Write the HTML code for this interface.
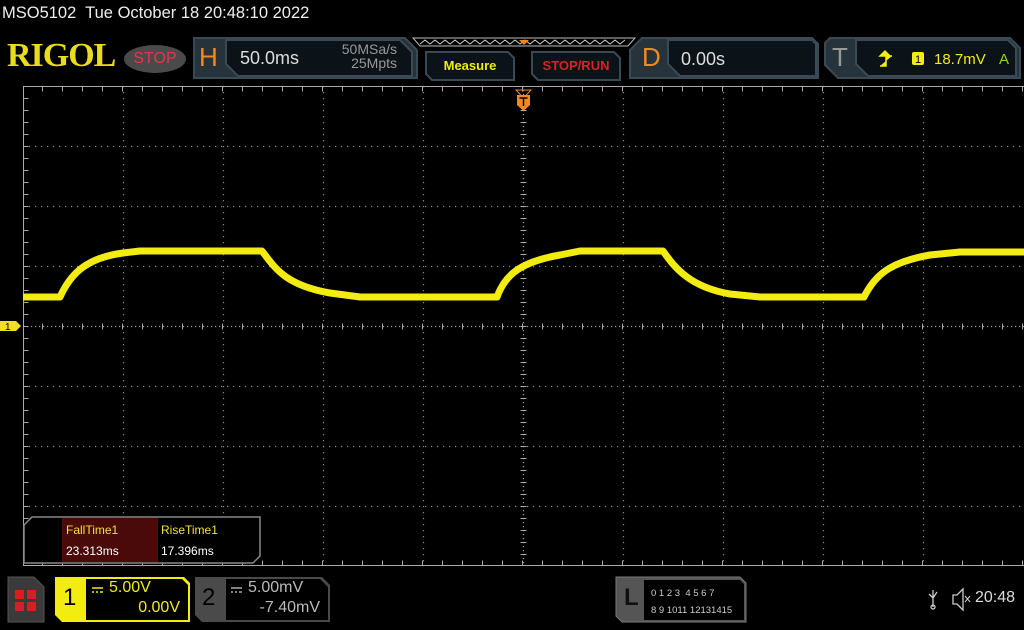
<!DOCTYPE html>
<html><head><meta charset="utf-8"><style>
html,body{margin:0;padding:0;background:#000;width:1024px;height:630px;overflow:hidden;font-family:"Liberation Sans",sans-serif;position:relative}
.a{position:absolute}
</style></head><body>
<div class="a" style="left:2px;top:4px;color:#eee;font-size:16.5px">MSO5102&nbsp; Tue October 18 20:48:10 2022</div>
<div class="a" style="left:7px;top:37px;color:#e8dc1c;font-family:'Liberation Serif',serif;font-weight:bold;font-size:34px;letter-spacing:-1px;transform:scaleX(1.0);transform-origin:left">RIGOL</div>
<div class="a" style="left:124px;top:45px;width:62px;height:28px;border-radius:50%;background:#4a4a4a;color:#e8344a;font-size:16px;line-height:28px;text-align:center">STOP</div>
<svg class="a" style="left:0;top:0" width="1024" height="630">
<g fill="#0b1218" stroke="#3a4a54" stroke-width="2">
<path d="M194 38 H405 L417 50 V78 H194 Z" fill="#26333b"/>
<path d="M226 40 H400 L412 52 V76 H238 L226 64 Z"/>
<path d="M426 52 H508 L514 58 V80 H432 L426 74 Z"/>
<path d="M532 52 H614 L620 58 V80 H538 L532 74 Z"/>
<path d="M642 38 H812 L818 44 V78 H630 V50 Z" fill="#26333b"/>
<path d="M668 40 H812 L816 44 V76 H680 L668 64 Z"/>
<path d="M830 38 H1010 L1020 48 V78 H838 L825 65 V43 Z" fill="#26333b"/>
<path d="M856 40 H1008 L1016 48 V76 H868 L856 64 Z"/>
</g>
<path d="M413 38 H635 L628 46 H420 Z" fill="none" stroke="#bbb" stroke-width="1"/>
<polyline points="420,44 425,40 430,44 435,40 440,44 445,40 450,44 455,40 460,44 465,40 470,44 475,40 480,44 485,40 490,44 495,40 500,44 505,40 510,44 515,40 520,44 525,40 530,44 535,40 540,44 545,40 550,44 555,40 560,44 565,40 570,44 575,40 580,44 585,40 590,44 595,40 600,44 605,40 610,44 615,40 620,44 625,40" fill="none" stroke="#ccc" stroke-width="1"/>
<path d="M519 40 H529 L524 45 Z" fill="#f08a20"/>
<!-- grid -->
<g stroke="#888" stroke-width="1.2" stroke-dasharray="1.2 4.8">
<path d="M123.5 86V566M223.5 86V566M323.5 86V566M423.5 86V566M623.5 86V566M723.5 86V566M823.5 86V566M923.5 86V566"/>
<path d="M23 146.5H1024M23 206.5H1024M23 266.5H1024M23 386.5H1024M23 446.5H1024M23 506.5H1024"/>
</g>
<g stroke="#999" stroke-width="1.2" stroke-dasharray="1.2 2.8">
<path d="M523.5 86V566M23 326.5H1024"/>
</g>
<g stroke="#aaa" stroke-width="1">
<path d="M23 86.5H1024M23.5 86V566M23 565.5H1024"/>
</g>
<g stroke="#aaa" stroke-width="1">
<path d="M23 326.5H1024" stroke-width="6" stroke-dasharray="1 19" stroke-dashoffset="-19"/>
<path d="M523.5 86V566" stroke-width="6" stroke-dasharray="1 11" stroke-dashoffset="0"/>
<path d="M23 89H1024" stroke-width="5" stroke-dasharray="1 19" stroke-dashoffset="-19"/>
<path d="M23 563H1024" stroke-width="5" stroke-dasharray="1 19" stroke-dashoffset="-19"/>
<path d="M26 86V566" stroke-width="5" stroke-dasharray="1 11"/>
</g>
<path d="M0 321 H16 L21 326 L16 331 H0 Z" fill="#f0e020"/>
<text x="5" y="330" font-size="10" fill="#000" font-family="Liberation Sans">1</text>
<path d="M516 90 L531 90 L523.5 98 Z" fill="none" stroke="#f08a20"/>
<path d="M517 95 H530 V105 L523.5 111 L517 105 Z" fill="#f08a20"/>
<path d="M519.5 98 H527.5 M523.5 98 V106" stroke="#000" stroke-width="1.5"/>
<path d="M23 297 H60 C70 275 85 258 123 253 L140 251 H262 C275 268 285 285 330 293 L360 297 H497 C505 275 520 262 560 255 L580 251 H663 C675 268 690 287 730 294 L760 297 H864 C875 275 890 262 930 255 L960 252 H1024" fill="none" stroke="#f2ec10" stroke-width="7" stroke-linejoin="round"/>
<!-- measurement box -->
<path d="M32 517 H260 V556 L253 563 H24 V525 Z" fill="#000" stroke="#888" stroke-width="1.5"/>
<rect x="62" y="518" width="96" height="44" fill="#4a0a0a"/>
<!-- bottom bar -->
<path d="M8 577 H34 L44 587 V622 H8 Z" fill="#3a3a3a" stroke="#555"/>
<g fill="#d42020"><rect x="15" y="590" width="9" height="9"/><rect x="27" y="590" width="9" height="9"/><rect x="15" y="602" width="9" height="9"/><rect x="27" y="602" width="9" height="9"/></g>
<path d="M55 577 H184 L190 583 V622 H62 L55 615 Z" fill="#f2ec10"/>
<path d="M86 579 H182 L188 585 V620 H86 Z" fill="#000"/>
<path d="M195 577 H322 L330 585 V622 H202 L195 615 Z" fill="#4a4a4a"/>
<path d="M226 579 H320 L328 587 V620 H226 Z" fill="#000"/>
<path d="M92 588 H103 M92 592 H94 M96 592 H98 M100 592 H103" stroke="#f2ec10" stroke-width="1.5"/>
<path d="M231 588 H242 M231 592 H233 M235 592 H237 M239 592 H242" stroke="#aaa" stroke-width="1.5"/>
<path d="M616 577 H740 L746 583 V622 H622 L616 616 Z" fill="#555" stroke="#777"/>
<path d="M644 580 H740 L744 584 V620 H644 Z" fill="#000"/>
<!-- trigger icon -->
<path d="M880 66 H886 V56 H892 M880 56 L885 51 L890 56 Z" stroke="#f2ec10" stroke-width="1.5" fill="#f2ec10"/>
<rect x="912" y="52" width="12" height="13" rx="2" fill="#f2ec10"/>
<text x="915" y="63" font-size="11" fill="#000" font-family="Liberation Sans">1</text>
<!-- usb & speaker -->
<path d="M933 590 V607 M929 594 L933 598 L937 592 M933 607 m-2 0 a2 2 0 1 0 4 0 a2 2 0 1 0 -4 0" stroke="#ccc" fill="none" stroke-width="1.3"/>
<path d="M953 595 H957 L963 589 V610 L957 604 H953 Z" fill="none" stroke="#ccc" stroke-width="1.3"/>
<path d="M965 596 L970 602 M970 596 L965 602" stroke="#ccc"/>
</svg>
<div class="a" style="left:240px;top:48px;color:#ddd;font-size:18px">50.0ms</div>
<div class="a" style="left:333px;top:42px;color:#999;font-size:14px;line-height:14px;text-align:right;width:64px">50MSa/s<br>25Mpts</div>
<div class="a" style="left:199px;top:42px;color:#f08a20;font-size:26px">H</div>
<div class="a" style="left:426px;top:58px;width:88px;text-align:center;color:#f2ec10;font-size:13px;font-weight:bold">Measure</div>
<div class="a" style="left:532px;top:58px;width:88px;text-align:center;color:#e02020;font-size:13px;font-weight:bold">STOP/RUN</div>
<div class="a" style="left:642px;top:42px;color:#f08a20;font-size:26px">D</div>
<div class="a" style="left:681px;top:49px;color:#ddd;font-size:18px">0.00s</div>
<div class="a" style="left:832px;top:42px;color:#999;font-size:26px">T</div>
<div class="a" style="left:934px;top:51px;color:#f2ec10;font-size:15px">18.7mV</div>
<div class="a" style="left:999px;top:51px;color:#9ed020;font-size:15px">A</div>
<div class="a" style="left:66px;top:523px;color:#f2e040;font-size:12px">FallTime1</div>
<div class="a" style="left:161px;top:523px;color:#f2e040;font-size:12px">RiseTime1</div>
<div class="a" style="left:66px;top:544px;color:#fff;font-size:12px">23.313ms</div>
<div class="a" style="left:161px;top:544px;color:#fff;font-size:12px">17.396ms</div>
<div class="a" style="left:63px;top:584px;color:#000;font-size:24px">1</div>
<div class="a" style="left:109px;top:579px;color:#f2ec10;font-size:16px">5.00V</div>
<div class="a" style="left:120px;top:599px;color:#f2ec10;font-size:16px;width:60px;text-align:right">0.00V</div>
<div class="a" style="left:202px;top:584px;color:#000;font-size:24px">2</div>
<div class="a" style="left:248px;top:579px;color:#bbb;font-size:16px">5.00mV</div>
<div class="a" style="left:250px;top:599px;color:#bbb;font-size:16px;width:70px;text-align:right">-7.40mV</div>
<div class="a" style="left:624px;top:584px;color:#111;font-size:24px;font-weight:bold">L</div>
<div class="a" style="left:651px;top:585px;color:#ccc;font-size:9.5px;line-height:17px">0 1 2 3 &nbsp;4 5 6 7<br>8 9 1011 12131415</div>
<div class="a" style="left:975px;top:589px;color:#ddd;font-size:16px">20:48</div>
</body></html>
